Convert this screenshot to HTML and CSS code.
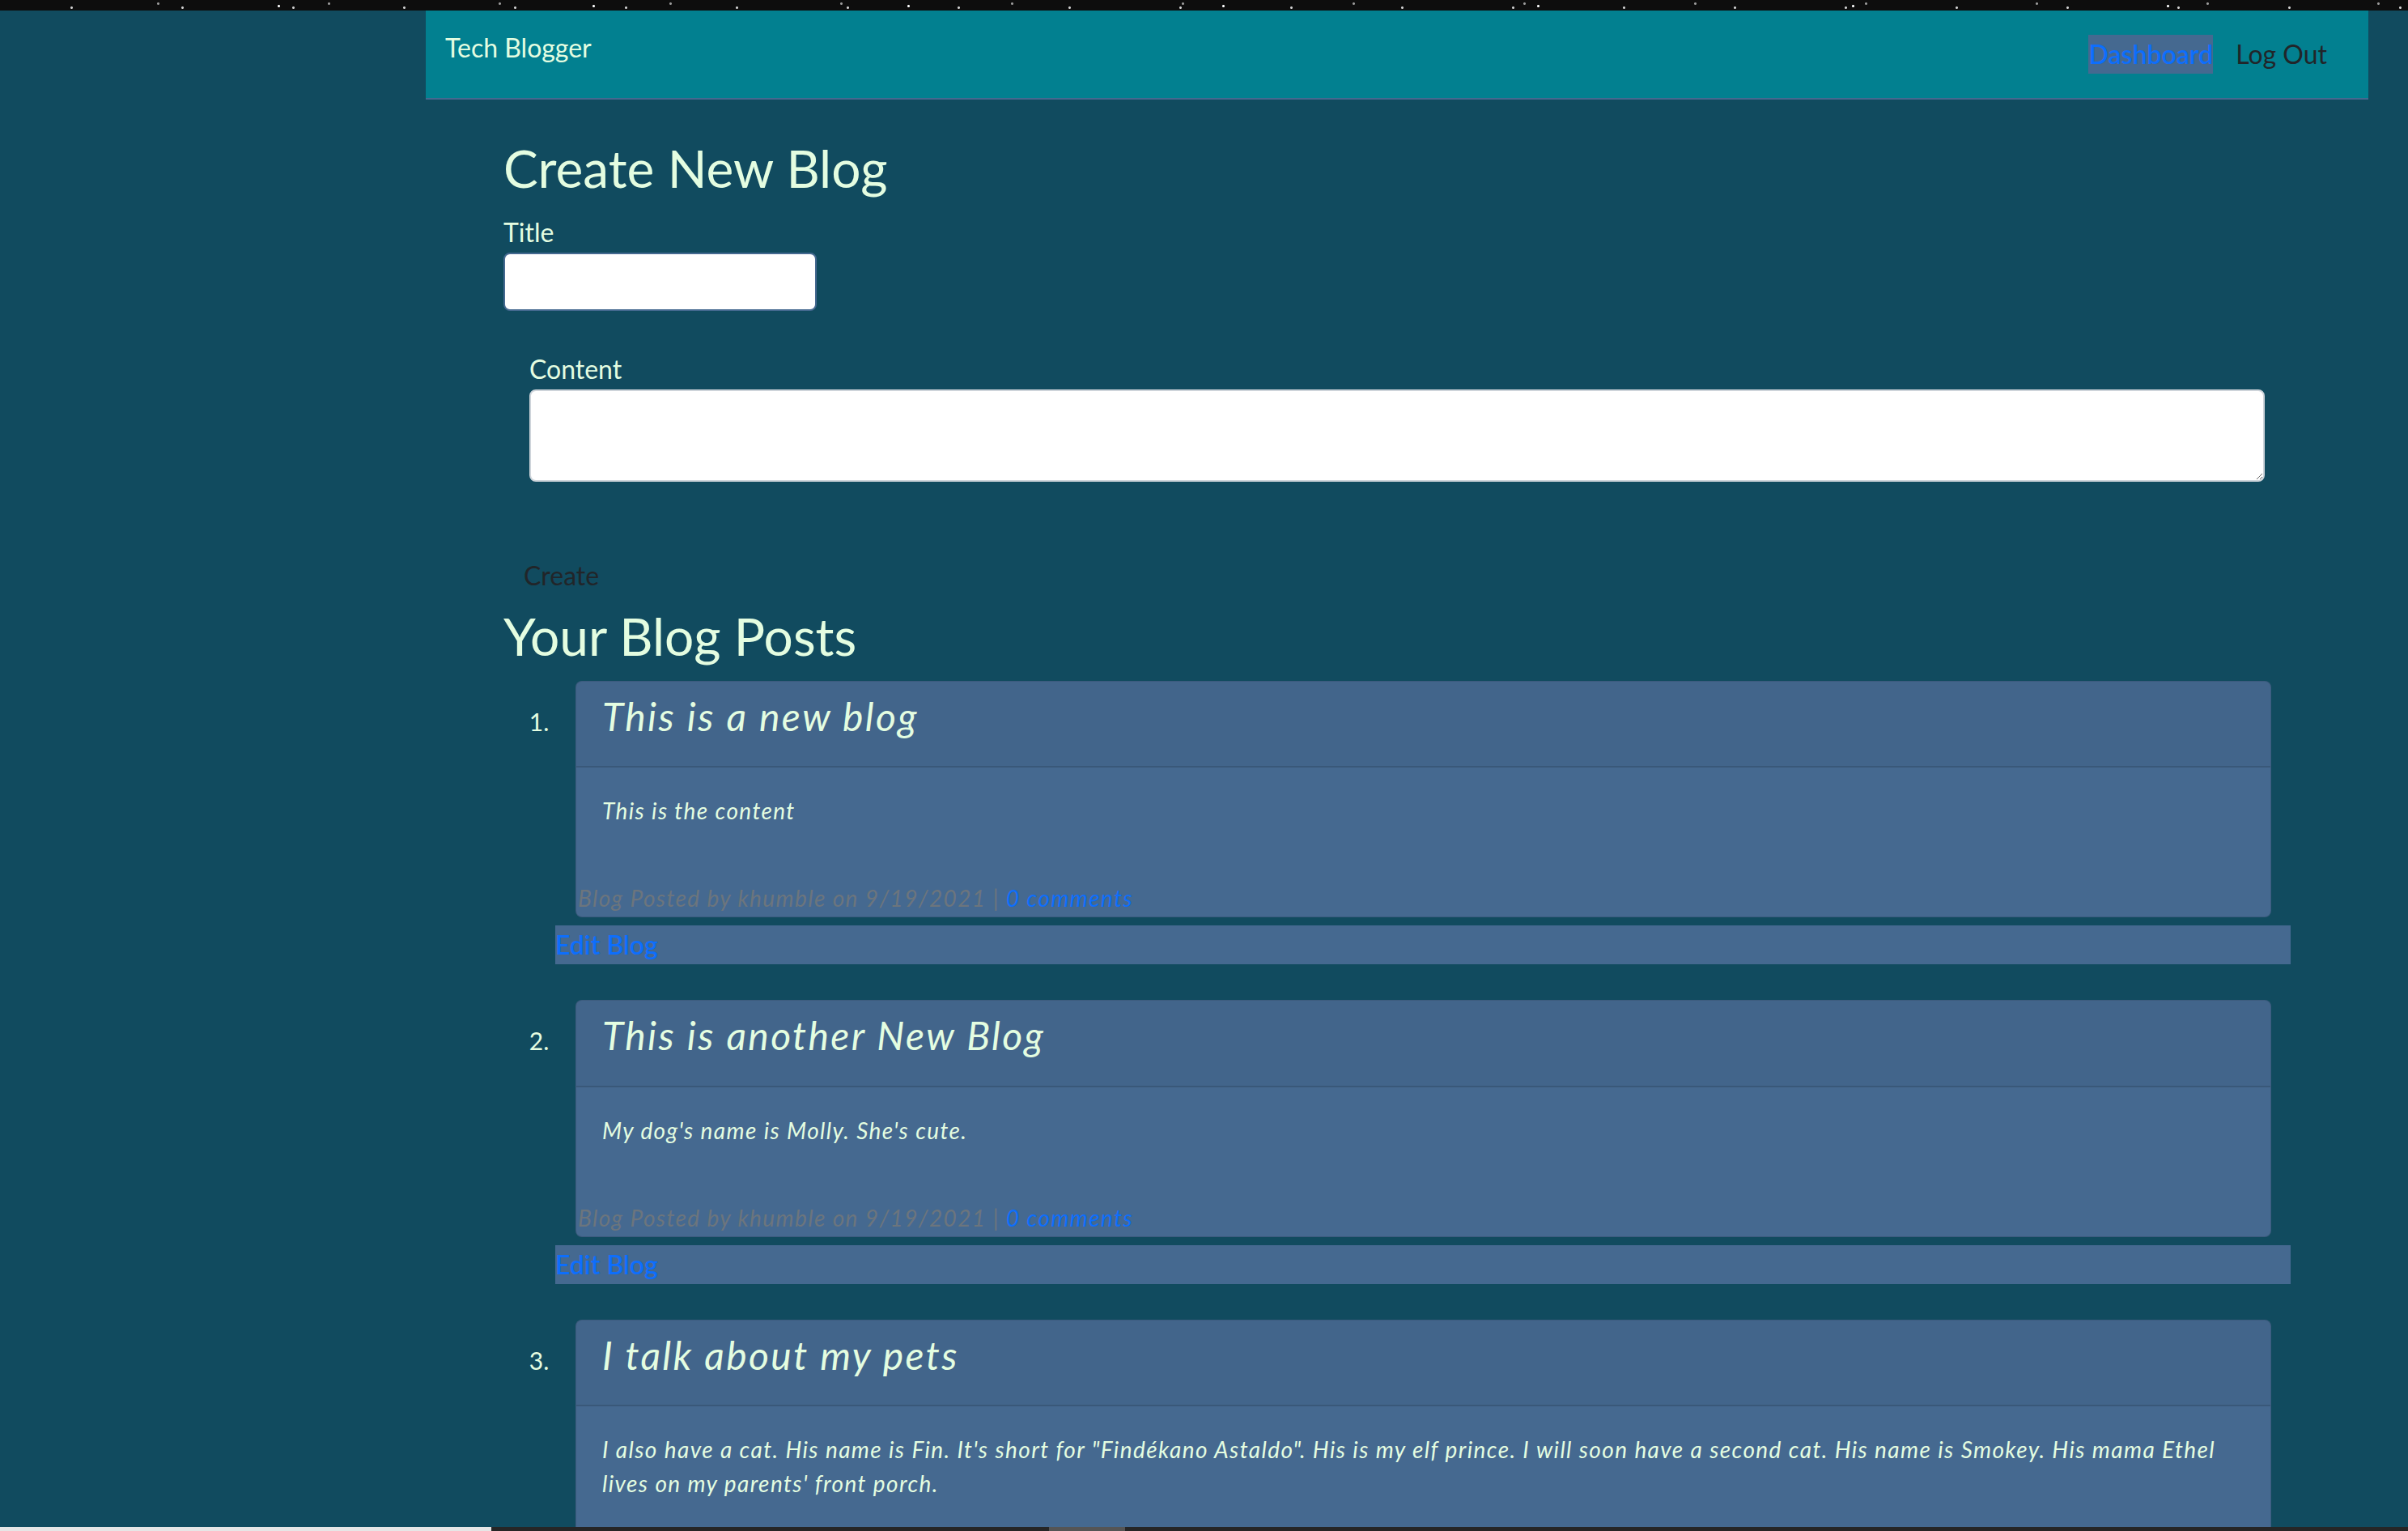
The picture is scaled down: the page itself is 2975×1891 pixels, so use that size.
FILE: index.html
```html
<!DOCTYPE html>
<html lang="en">
<head>
<meta charset="utf-8">
<title>Tech Blogger - Dashboard</title>
<link rel="stylesheet" href="styles.css">
</head>
<body>
<div class="stars"></div>
<div class="page">
  <header class="navbar">
    <a class="brand" href="#">Tech Blogger</a>
    <nav class="nav-links">
      <a class="nav-dash" href="#">Dashboard</a>
      <a class="nav-logout" href="#">Log Out</a>
    </nav>
  </header>
  <main class="container">
    <h2 class="heading heading-first">Create New Blog</h2>
    <form class="blog-form">
      <div class="field-title">
        <label class="field-label" for="title">Title</label>
        <input class="input-title" id="title" type="text">
      </div>
      <div class="field-content">
        <label class="field-label" for="content">Content</label>
        <textarea class="input-content" id="content"></textarea>
      </div>
      <button class="btn-create" type="button">Create</button>
    </form>
    <h2 class="heading">Your Blog Posts</h2>
    <ol class="posts">
      <li class="post">
        <div class="card">
          <div class="card-header"><h4 class="card-title">This is a new blog</h4></div>
          <div class="card-body"><p class="card-text">This is the content</p></div>
          <div class="card-footer">Blog Posted by khumble on 9/19/2021 | <a class="comments" href="#">0 comments</a></div>
        </div>
        <div class="edit-bar"><a class="edit-link" href="#">Edit Blog</a></div>
      </li>
      <li class="post">
        <div class="card">
          <div class="card-header"><h4 class="card-title">This is another New Blog</h4></div>
          <div class="card-body"><p class="card-text">My dog's name is Molly. She's cute.</p></div>
          <div class="card-footer">Blog Posted by khumble on 9/19/2021 | <a class="comments" href="#">0 comments</a></div>
        </div>
        <div class="edit-bar"><a class="edit-link" href="#">Edit Blog</a></div>
      </li>
      <li class="post">
        <div class="card">
          <div class="card-header"><h4 class="card-title">I talk about my pets</h4></div>
          <div class="card-body"><p class="card-text">I also have a cat. His name is Fin. It's short for "Findékano Astaldo". His is my elf prince. I will soon have a second cat. His name is Smokey. His mama Ethel lives on my parents' front porch.</p></div>
          <div class="card-footer">Blog Posted by khumble on 9/19/2021 | <a class="comments" href="#">0 comments</a></div>
        </div>
        <div class="edit-bar"><a class="edit-link" href="#">Edit Blog</a></div>
      </li>
    </ol>
  </main>
</div>
<div class="hscroll"><div class="hscroll-track"></div><div class="hscroll-thumb"></div></div>
</body>
</html>
```
FILE: styles.css
```css
html, body {
  overflow: hidden;
}
body {
  margin: 0;
  background: #114b5f;
  color: #e4fde1;
  font-family: "Lato", "Open Sans", sans-serif;
  font-size: 32px;
  line-height: 1.5;
}
a { text-decoration: none; }

.stars {
  height: 13px;
  background-color: #0d0d0d;
  background-image:
    radial-gradient(circle, #cfcfcf 0 1px, transparent 2px),
    radial-gradient(circle, #9a9a9a 0 1px, transparent 2px),
    radial-gradient(circle, #ffffff 0 1px, transparent 2px);
  background-size: 137px 13px, 211px 13px, 389px 13px;
  background-position: 20px 3px, 90px -2px, 150px 1px;
}

.page {
  margin-left: 526px;
  width: 2400px;
}

.navbar {
  display: flex;
  align-items: flex-start;
  height: 108px;
  background: #028090;
  border-bottom: 2px solid #456990;
}
.brand {
  margin: 22px 0 0 24px;
  color: #e4fde1;
  font-size: 32px;
  line-height: 48px;
}
.nav-links {
  display: flex;
  align-items: center;
  gap: 28px;
  margin: 30px 51px 0 auto;
}
.nav-dash {
  display: block;
  background: #456990;
  color: #0d6efd;
  font-weight: 600;
  line-height: 48px;
}
.nav-logout {
  display: block;
  color: #212529;
  line-height: 48px;
}

.container {
  padding: 0 96px;
}
.heading {
  margin: 0 0 16px;
  font-size: 64px;
  line-height: 1.2;
  font-weight: 400;
  color: #e4fde1;
}
.heading-first {
  margin-top: 47px;
}

.field-label {
  display: block;
  margin-bottom: 1px;
  font-size: 32px;
  line-height: 48px;
}
.input-title {
  display: block;
  box-sizing: border-box;
  width: 387px;
  height: 72px;
  border: 2px solid #456990;
  border-radius: 8px;
  background: #fff;
  font-size: 32px;
}
.field-content {
  margin-top: 48px;
  padding: 0 32px;
}
.input-content {
  display: block;
  box-sizing: border-box;
  width: 100%;
  height: 114px;
  border: 2px solid #ced4da;
  border-radius: 8px;
  background: #fff;
  font-size: 32px;
  resize: both;
}
.btn-create {
  display: block;
  margin-top: 79px;
  padding: 12px 24px;
  border: 1px solid transparent;
  background: transparent;
  color: #212529;
  font-family: inherit;
  font-size: 32px;
  line-height: 48px;
}

.posts {
  margin: 6px 0 0;
  padding-left: 64px;
}
.post {
  font-size: 28px;
  line-height: 42px;
  margin-bottom: 44px;
}
.post::marker {
  color: #e4fde1;
  font-size: 30px;
}

.card {
  margin: 0 24px 0 25px;
  border: 1px solid rgba(0, 0, 0, 0.125);
  border-radius: 8px;
  background: #456990;
  font-style: italic;
  letter-spacing: 0.05em;
  overflow: hidden;
}
.card-header {
  padding: 14px 32px 17px;
  background: rgba(0, 0, 0, 0.03);
  border-bottom: 2px solid rgba(0, 0, 0, 0.125);
}
.card-title {
  margin: 0 0 16px;
  font-size: 48px;
  line-height: 1.2;
  font-weight: 400;
  letter-spacing: 0.05em;
}
.card-body {
  padding: 32px 32px 34px;
}
.card-text {
  margin: 0 0 32px;
  font-size: 28px;
  line-height: 42px;
}
.card-footer {
  padding: 0 0 2px 2px;
  color: #6c757d;
  font-size: 28px;
  line-height: 42px;
}
.comments {
  color: #0d6efd;
}

.edit-bar {
  margin-top: 10px;
  background: #456990;
  font-size: 32px;
  line-height: 48px;
}
.edit-link {
  color: #0d6efd;
  font-weight: 600;
}

.hscroll {
  position: fixed;
  left: 0;
  bottom: 0;
  width: 100%;
  height: 5px;
  background: #262626;
}
.hscroll-track {
  position: absolute;
  left: 0;
  top: 0;
  width: 607px;
  height: 5px;
  background: #e6e6e6;
}
.hscroll-thumb {
  position: absolute;
  left: 1296px;
  top: 0;
  width: 94px;
  height: 5px;
  background: #555;
}
```
